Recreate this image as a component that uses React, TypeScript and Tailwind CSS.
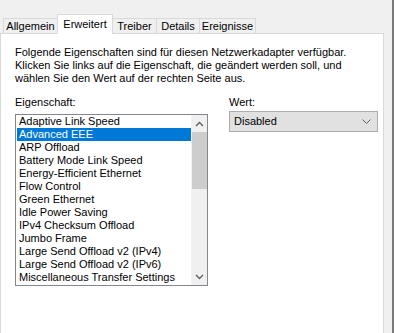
import React from "react";

const items = [
  "Adaptive Link Speed",
  "Advanced EEE",
  "ARP Offload",
  "Battery Mode Link Speed",
  "Energy-Efficient Ethernet",
  "Flow Control",
  "Green Ethernet",
  "Idle Power Saving",
  "IPv4 Checksum Offload",
  "Jumbo Frame",
  "Large Send Offload v2 (IPv4)",
  "Large Send Offload v2 (IPv6)",
  "Miscellaneous Transfer Settings",
];

const tabs = [
  { label: "Allgemein", w: "w-[55px]" },
  { label: "Erweitert", w: "w-[56px]", active: true },
  { label: "Treiber", w: "w-[45px]" },
  { label: "Details", w: "w-[44px]" },
  { label: "Ereignisse", w: "w-[57px]" },
];

function Chevron({ up }: { up?: boolean }) {
  return (
    <svg width="9" height="6" viewBox="0 0 9 6">
      <path
        d={up ? "M1 5 L4.5 1.5 L8 5" : "M1 1 L4.5 4.5 L8 1"}
        fill="none"
        stroke="#606060"
        strokeWidth="1.4"
      />
    </svg>
  );
}

export default function App() {
  return (
    <div
      className="flex w-[394px] h-[333px] overflow-hidden bg-[#f0f0f0] text-[11px] text-black"
      style={{ fontFamily: '"Liberation Sans", Arial, sans-serif' }}
    >
      <div className="flex flex-col w-[392px]">
        <div className="h-[13px] shrink-0" />
        {/* tab strip */}
        <div className="flex items-end h-[20px] pl-[3px] shrink-0 relative z-10">
          {tabs.map((t) =>
            t.active ? (
              <div
                key={t.label}
                className={`${t.w} h-[20px] -mb-px -ml-px bg-white border border-b-0 border-[#d9d9d9] flex items-start justify-center pt-[2px] leading-[14px]`}
              >
                {t.label}
              </div>
            ) : (
              <div
                key={t.label}
                className={`${t.w} h-[15px] bg-[#f0f0f0] border border-b-0 border-[#d9d9d9] -ml-px first:ml-0 flex items-center justify-center leading-[14px]`}
              >
                {t.label}
              </div>
            )
          )}
        </div>
        <div className="flex flex-1">
          {/* panel */}
          <div className="w-[384px] h-full bg-white border border-[#d9d9d9] border-b-0 pl-[14px] pt-[12px]">
            <p className="leading-[13px]">
              Folgende Eigenschaften sind für diesen Netzwerkadapter verfügbar.
              <br />
              Klicken Sie links auf die Eigenschaft, die geändert werden soll, und
              <br />
              wählen Sie den Wert auf der rechten Seite aus.
            </p>
            <div className="flex mt-[11px]">
              <div className="w-[214px]">
                <div className="leading-[13px]">Eigenschaft:</div>
                <div className="mt-[5px] w-[193px] h-[172px] border border-[#828790] flex">
                  <div className="flex-1 pl-[1px]">
                    {items.map((it, i) => (
                      <div
                        key={it}
                        className={`h-[13px] leading-[13px] pl-[2px] whitespace-nowrap ${
                          i === 1 ? "bg-[#0078d7] text-white" : ""
                        }`}
                      >
                        {it}
                      </div>
                    ))}
                  </div>
                  <div className="w-[16px] bg-[#f0f0f0] flex flex-col items-center">
                    <div className="h-[17px] flex items-center justify-center">
                      <Chevron up />
                    </div>
                    <div className="w-[15px] h-[57px] bg-[#cdcdcd]" />
                    <div className="flex-1" />
                    <div className="h-[17px] flex items-center justify-center">
                      <Chevron />
                    </div>
                  </div>
                </div>
              </div>
              <div>
                <div className="leading-[13px]">Wert:</div>
                <div className="mt-[2px] w-[149px] h-[21px] bg-[#e1e1e1] border border-[#adadad] flex items-center justify-between pl-[4px] pr-[6px]">
                  <span>Disabled</span>
                  <svg width="9" height="5" viewBox="0 0 9 5">
                    <path d="M0.5 0.5 L4.5 4.5 L8.5 0.5" fill="none" stroke="#606060" strokeWidth="1" />
                  </svg>
                </div>
              </div>
            </div>
          </div>
          <div className="flex-1" />
        </div>
      </div>
      <div className="w-[2px] h-full bg-[#7a7a7a]" />
    </div>
  );
}
